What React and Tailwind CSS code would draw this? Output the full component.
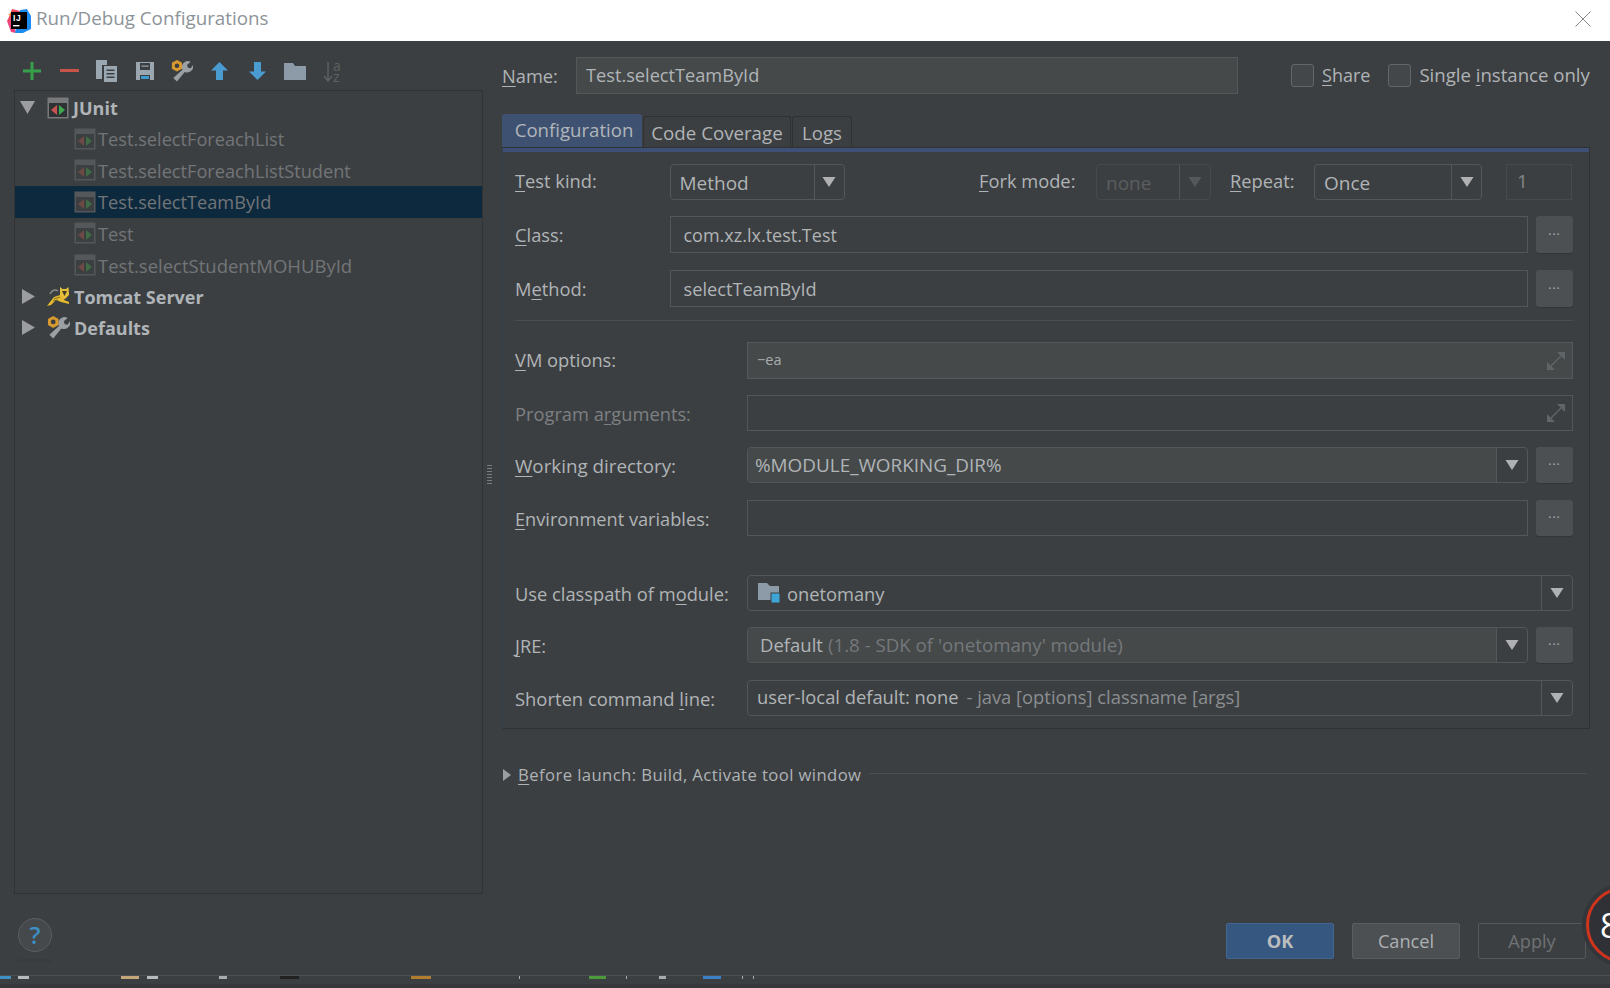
const Und = ({ children }) => (
  <span className="underline underline-offset-[3px] decoration-1">{children}</span>
);

const Tri = ({ className = "fill-[#afb1b3]" }) => (
  <svg width="14" height="12" viewBox="0 0 14 12" className={className}>
    <polygon points="0.5,1 13.5,1 7,11" />
  </svg>
);

const Caret = ({ disabled, className = "" }) => (
  <div className={`flex items-center justify-center border-l border-[#54575a] ${className}`}>
    <Tri className={disabled ? "fill-[#55585a]" : "fill-[#afb1b3]"} />
  </div>
);

const Dots = () => (
  <button className="flex h-full w-[37px] shrink-0 items-center justify-center rounded-[3px] bg-[#4c5052] text-[12px] leading-none tracking-[1px] text-[#b5b7b9] shadow-[0_1px_1px_#333537]">
    ···
  </button>
);

const Expand = () => (
  <svg width="18" height="18" viewBox="0 0 18 18" className="shrink-0">
    <polygon points="10,0 18,0 18,8" fill="#5f6467" />
    <polygon points="0,10 0,18 8,18" fill="#5f6467" />
    <path d="M14 4 4 14" stroke="#5f6467" strokeWidth="1.5" />
  </svg>
);

const JUnitIcon = ({ dim }) => (
  <svg width="22" height="22" viewBox="0 0 22 22" className="shrink-0">
    <rect x="0.5" y="0.5" width="21" height="21" fill={dim ? "#55585a" : "#77797b"} />
    <rect x="2" y="6" width="18" height="14" fill={dim ? "#3c3f41" : "#2f3234"} />
    <polygon points="10,8 10,18 4,13" fill={dim ? "#6e4a45" : "#c75450"} />
    <polygon points="12,8 12,18 18,13" fill={dim ? "#3f6b45" : "#3ea84f"} />
  </svg>
);

const WrenchIcon = ({ size = 23 }) => (
  <svg width={size} height={size} viewBox="0 0 24 24" className="shrink-0">
    <path d="M6.5 23.5 2.5 19.5 12.5 10.5a6.5 6.5 0 0 1 9-8.5L17.5 5.5l1 3 3 .5 2.5-3.5a6.5 6.5 0 0 1-9 7.5z" fill="#9aa0a4" />
    <polygon points="6.5,0 12,3 12,9.5 6.5,12.5 1,9.5 1,3" fill="#d89a2e" />
    <circle cx="6.5" cy="6.2" r="2.5" fill="#3c3f41" />
  </svg>
);

const TomcatIcon = () => (
  <svg width="23" height="22" viewBox="0 0 23 22" className="shrink-0">
    <path d="M3 9c2-4 5-5 8-3" fill="none" stroke="#8b8d85" strokeWidth="1.4" />
    <polygon points="13,2 15.5,4 19,4 21.5,2 22,10 18,14 13,11" fill="#e4c13c" />
    <path d="M15 6h5l-2.5 5z" fill="#3f3a22" />
    <polygon points="13,10 18,13 17,15 22,17 22,19 14,17 9,15 4,20 0,21 3,17 7,12" fill="#e4b82f" />
    <path d="M7 14l6-2M6 16l5-1" stroke="#6a5a1e" strokeWidth="0.8" />
  </svg>
);

const IdeaLogo = () => (
  <svg width="26" height="26" viewBox="0 0 26 26" className="shrink-0">
    <polygon points="6,1 14,3 10,14 1,13 3,9" fill="#f0445f" />
    <polygon points="1,13 7,12 10,25 5,24" fill="#f0447a" />
    <polygon points="14,2 21,1 25,8 25,21 17,25 9,25" fill="#1d8cf0" />
    <polygon points="2,7 6,4 7,8" fill="#fb8c2f" />
    <rect x="5" y="4" width="16" height="17" fill="#000" />
    <text x="7" y="13" fontSize="8.5" fontWeight="700" fill="#fff" fontFamily="Liberation Sans, sans-serif" letterSpacing="0.6">IJ</text>
    <rect x="7" y="17" width="6.5" height="1.4" fill="#fff" />
  </svg>
);

const toolbarIcons = [
  <svg width="18" height="18" viewBox="0 0 18 18"><path d="M7.5 0h3v7.5H18v3h-7.5V18h-3v-7.5H0v-3h7.5z" fill="#36a04a" /></svg>,
  <svg width="19" height="4" viewBox="0 0 19 4"><rect width="19" height="3" fill="#c9544a" /></svg>,
  <svg width="21" height="22" viewBox="0 0 21 22">
    <path d="M0 0h11v5H6v14H0z" fill="#9aa7b0" />
    <path d="M8 6h13v16H8z" fill="#9aa7b0" />
    <path d="M10.5 9.5h8v1.5h-8zM10.5 13h8v1.5h-8zM10.5 16.5h8v1.5h-8z" fill="#3c3f41" />
  </svg>,
  <svg width="18" height="18" viewBox="0 0 18 18">
    <path d="M0 0h18v18H0z" fill="#9aa7b0" />
    <path d="M4 1h10v7H4z" fill="#3c3f41" />
    <path d="M5.5 3.5h7v1.2h-7z" fill="#9aa7b0" />
    <path d="M4 13h10v5H4z" fill="#3c3f41" />
    <path d="M5 14h8v3H5z" fill="#3d9bd0" />
  </svg>,
  <WrenchIcon size={22} />,
  <svg width="17" height="18" viewBox="0 0 17 18"><polygon points="8.5,0 17,8.5 12,8.5 12,18 5,18 5,8.5 0,8.5" fill="#4a9cd0" /></svg>,
  <svg width="17" height="18" viewBox="0 0 17 18"><polygon points="8.5,18 17,9.5 12,9.5 12,0 5,0 5,9.5 0,9.5" fill="#4a9cd0" /></svg>,
  <svg width="22" height="17" viewBox="0 0 22 17"><path d="M0 0h9l2 3h11v14H0z" fill="#8c9ba7" /></svg>,
  <div className="flex h-[22px] w-[19px]">
    <svg width="10" height="20" viewBox="0 0 10 20" className="mt-[2px]">
      <path d="M5 0v19M1 14l4 5 4-5" fill="none" stroke="#5e6163" strokeWidth="1.4" />
    </svg>
    <div className="flex flex-col text-[14px] leading-[11px] text-[#5e6163]">
      <span>a</span>
      <span>z</span>
    </div>
  </div>,
];

const tests = [
  { name: "Test.selectForeachList", size: "text-[18.2px]" },
  { name: "Test.selectForeachListStudent", size: "text-[18.2px]" },
  { name: "Test.selectTeamById", size: "text-[18.2px]", selected: true },
  { name: "Test", size: "text-[18.2px]" },
  { name: "Test.selectStudentMOHUById", size: "text-[18.5px]" },
];

const Group = ({ open, icon, label }) => (
  <div className="flex h-[31.4px] items-center pl-[5px]">
    <div className="flex w-[27px] items-center">
      {open ? (
        <svg width="15" height="13" viewBox="0 0 15 13"><polygon points="0,0 15,0 7.5,13" fill="#9b9da0" /></svg>
      ) : (
        <svg width="13" height="15" viewBox="0 0 13 15" className="ml-[2px]"><polygon points="0,0 13,7.5 0,15" fill="#9b9da0" /></svg>
      )}
    </div>
    {icon}
    <span className="ml-[4px] pt-[2px] text-[18px] font-bold text-[#afb4b8]">{label}</span>
  </div>
);

const Tree = () => (
  <div className="h-[804px] w-[469px] border border-[#303234] pt-[1px]">
    <Group open icon={<JUnitIcon />} label="JUnit" />
    {tests.map((t) => (
      <div
        key={t.name}
        className={`flex h-[31.4px] items-center pl-[59px] ${t.selected ? "bg-[#0d293e]" : ""}`}
      >
        <JUnitIcon dim />
        <span className={`ml-[2px] pt-[2px] text-[#727578] ${t.size}`}>{t.name}</span>
      </div>
    ))}
    <Group icon={<TomcatIcon />} label="Tomcat Server" />
    <Group icon={<WrenchIcon />} label="Defaults" />
  </div>
);

const Label = ({ children, shift = "pt-[2px]", className = "w-[154.5px] text-[#b0b4b7]" }) => (
  <div className={`shrink-0 text-[18.3px] ${shift} ${className}`}>{children}</div>
);

const Input = ({ children, filled, className = "" }) => (
  <div
    className={`flex h-full min-w-0 flex-1 items-center border ${
      filled ? "border-[#54585a] bg-[#45494a]" : "border-[#54575a]"
    } ${className}`}
  >
    {children}
  </div>
);

const Combo = ({ children, filled, caret = "w-[31px]" }) => (
  <div className="flex h-full min-w-0 flex-1 overflow-hidden rounded-[4px] border border-[#54575a]">
    <div className={`flex min-w-0 flex-1 items-center ${filled ? "bg-[#45494a]" : ""}`}>{children}</div>
    <Caret className={caret} />
  </div>
);

const Tabs = () => (
  <div className="flex h-[34px] items-end border-b border-[#2f3133]">
    <div className="flex h-[33px] w-[140px] justify-center rounded-t-[3px] bg-[#3f5170] pl-[4px] pt-[2px] text-[18.6px] text-[#b0b6bb]">
      Configuration
    </div>
    <div className="ml-[1px] flex h-[31px] w-[148px] items-center justify-center rounded-t-[3px] border border-b-0 border-[#2f3133] pt-[2px] text-[18.7px] text-[#b0b4b7]">
      Code Coverage
    </div>
    <div className="ml-[1px] flex h-[31px] w-[60px] items-center justify-center rounded-t-[3px] border border-b-0 border-[#2f3133] pt-[2px] text-[18.6px] text-[#b0b4b7]">
      Logs
    </div>
  </div>
);

const wideLabel = "w-[232px] text-[#b0b4b7]";

const ConfigPanel = () => (
  <div className="h-[581px] border-x border-b border-[#2f3133] border-l-[#34404f]">
    <div className="h-[4px] bg-[#3f5078]" />
    <div className="pl-[12px] pr-[16px]">
      <div className="mt-[12px] flex h-[36px] items-center">
        <Label shift="pb-[2px]"><Und>T</Und>est kind:</Label>
        <div className="flex h-full w-[175px] overflow-hidden rounded-[4px] border border-[#54575a]">
          <span className="flex-1 pl-[9px] pt-[4px] text-[19px] text-[#b0b4b7]">Method</span>
          <Caret className="w-[30px]" />
        </div>
        <Label shift="pb-[2px]" className="ml-[134.5px] w-[117px] text-[#b0b4b7]"><Und>F</Und>ork mode:</Label>
        <div className="flex h-full w-[115px] overflow-hidden rounded-[4px] border border-[#47494b]">
          <span className="flex-1 pl-[9px] pt-[4px] text-[19px] text-[#5b5d5f]">none</span>
          <Caret disabled className="w-[31px] border-[#47494b]" />
        </div>
        <Label shift="pb-[2px]" className="ml-[19px] w-[84px] text-[#b0b4b7]"><Und>R</Und>epeat:</Label>
        <div className="flex h-full w-[168px] overflow-hidden rounded-[4px] border border-[#54575a]">
          <span className="flex-1 pl-[9px] pt-[4px] text-[19px] text-[#b0b4b7]">Once</span>
          <Caret className="w-[30px]" />
        </div>
        <div className="ml-[24px] flex h-full w-[66px] items-center border border-[#47494b] pb-[2px] pl-[10px] text-[19px] text-[#85888a]">
          1
        </div>
      </div>

      <div className="mt-[16px] flex h-[37px] items-center">
        <Label shift=""><Und>C</Und>lass:</Label>
        <Input><span className="pl-[13px] pt-[2px] text-[18px] text-[#b0b4b7]">com.xz.lx.test.Test</span></Input>
        <div className="ml-[8px] h-full"><Dots /></div>
      </div>

      <div className="mt-[17px] flex h-[37px] items-center">
        <Label shift="">M<Und>e</Und>thod:</Label>
        <Input><span className="pl-[13px] pt-[2px] text-[18.2px] text-[#b0b4b7]">selectTeamById</span></Input>
        <div className="ml-[8px] h-full"><Dots /></div>
      </div>

      <div className="mt-[13px] h-px bg-[#4b4e50]" />

      <div className="mt-[21px] flex h-[37px] items-center">
        <Label shift="pb-[1px]" className={wideLabel}><Und>V</Und>M options:</Label>
        <Input filled className="justify-between pr-[7px]">
          <span className="pb-[2px] pl-[9px] text-[14.5px] text-[#a9adb0]">−ea</span>
          <Expand />
        </Input>
      </div>

      <div className="mt-[16px] flex h-[36px] items-center">
        <Label className="w-[232px] text-[#7d8083]">Program a<Und>r</Und>guments:</Label>
        <Input className="justify-end border-[#494c4e] pr-[7px]"><Expand /></Input>
      </div>

      <div className="mt-[16px] flex h-[36px] items-center">
        <Label className={wideLabel}><span className="text-[18.8px]"><Und>W</Und>orking directory:</span></Label>
        <Combo filled><span className="pl-[7px] text-[18.9px] text-[#b0b4b7]">%MODULE_WORKING_DIR%</span></Combo>
        <div className="ml-[8px] h-full"><Dots /></div>
      </div>

      <div className="mt-[17px] flex h-[36px] items-center">
        <Label className={wideLabel}><span className="text-[18.2px]"><Und>E</Und>nvironment variables:</span></Label>
        <Input className="border-[#494c4e]" />
        <div className="ml-[8px] h-full"><Dots /></div>
      </div>

      <div className="mt-[39px] flex h-[36px] items-center">
        <Label className={wideLabel}>Use classpath of m<Und>o</Und>dule:</Label>
        <Combo>
          <svg width="23" height="21" viewBox="0 0 23 21" className="ml-[10px] shrink-0">
            <path d="M0 0h9l3 3h9v14H0z" fill="#8c9ba7" />
            <rect x="13" y="10" width="9" height="10" fill="#3da6d6" stroke="#3c3f41" />
          </svg>
          <span className="ml-[6px] pt-[2px] text-[18.3px] text-[#b0b4b7]">onetomany</span>
        </Combo>
      </div>

      <div className="mt-[16px] flex h-[36px] items-center">
        <Label className={wideLabel}><Und>J</Und>RE:</Label>
        <Combo filled>
          <span className="pl-[12px] text-[18.5px] text-[#b0b4b7]">Default</span>
          <span className="ml-[5px] text-[18.7px] text-[#75787b]">(1.8 - SDK of 'onetomany' module)</span>
        </Combo>
        <div className="ml-[8px] h-full"><Dots /></div>
      </div>

      <div className="mt-[17px] flex h-[36px] items-center">
        <Label className={wideLabel}><span className="text-[18.4px]">Shorten command <Und>l</Und>ine:</span></Label>
        <Combo>
          <span className="pb-[2px] pl-[9px] text-[18.35px] text-[#b0b4b7]">user-local default: none</span>
          <span className="ml-[8px] pb-[2px] text-[18.35px] text-[#8b8e91]">- java [options] classname [args]</span>
        </Combo>
      </div>
    </div>
  </div>
);

const Check = ({ children, className = "" }) => (
  <div className={`flex items-center ${className}`}>
    <div className="h-[23px] w-[23px] rounded-[3px] border border-[#646769] bg-[#43474a]" />
    <span className="ml-[8px] text-[#b0b4b7]">{children}</span>
  </div>
);

const Btn = ({ children, className = "" }) => (
  <button className={`h-[36px] w-[108px] rounded-[2px] border pt-[2px] text-[18.2px] ${className}`}>{children}</button>
);

// bits of the window behind the dialog, only their top edge shows
const peeks = [
  "ml-0 w-[11px] bg-[#3d8fc4]",
  "ml-[7px] w-[11px] bg-[#b8babc]",
  "ml-[92px] w-[18px] bg-[#c5a57a]",
  "ml-[8px] w-[11px] bg-[#b8babc]",
  "ml-[61px] w-[8px] bg-[#a9abad]",
  "ml-[53px] w-[19px] bg-[#222]",
  "ml-[112px] w-[20px] bg-[#b07d2e]",
  "ml-[88px] w-[1px] bg-[#a9abad]",
  "ml-[69px] w-[17px] bg-[#4c9a3c]",
  "ml-[20px] w-[1px] bg-[#a9abad]",
  "ml-[32px] w-[7px] bg-[#a9abad]",
  "ml-[37px] w-[18px] bg-[#3d7fc4]",
  "ml-[21px] w-[1px] bg-[#a9abad]",
  "ml-[10px] w-[1px] bg-[#a9abad]",
];

export default function App() {
  return (
    <div className="relative flex h-[988px] w-[1610px] flex-col overflow-hidden bg-[#3c3f41] font-['Open_Sans',sans-serif]">
      <div className="flex h-[41px] shrink-0 items-center bg-white pl-[6px] pr-[20px]">
        <IdeaLogo />
        <span className="ml-[4px] pb-[4px] text-[18.8px] text-[#8d9499]">Run/Debug Configurations</span>
        <svg width="16" height="16" viewBox="0 0 16 16" className="mb-[4px] ml-auto mr-[-1px]">
          <path d="M0.5 0.5l15 15M15.5 0.5l-15 15" stroke="#8a8a8a" strokeWidth="1" />
        </svg>
      </div>

      <div className="flex h-[852px] shrink-0">
        <div className="w-[483px] shrink-0 pl-[14px]">
          <div className="-ml-[1px] flex h-[49px] items-center pt-[11px]">
            {toolbarIcons.map((icon, i) => (
              <div key={i} className="flex w-[37.6px] justify-center">{icon}</div>
            ))}
          </div>
          <Tree />
        </div>

        <div className="flex w-[19px] shrink-0 justify-center pr-[6px] pt-[424px]">
          <div className="h-[21px] w-[5px] bg-[repeating-linear-gradient(to_bottom,#7b7e80_0,#7b7e80_1px,transparent_1px,transparent_3px)]" />
        </div>

        <div className="w-[1088px] shrink-0">
          <div className="mt-[16px] flex h-[37px] items-center">
            <div className="w-[74px] text-[18.3px] text-[#b0b4b7]"><Und>N</Und>ame:</div>
            <div className="flex h-full w-[662px] items-center border border-[#54585a] bg-[#45494a] pl-[9px] text-[18.2px] text-[#b0b4b7]">
              Test.selectTeamById
            </div>
            <Check className="ml-[53px]"><span className="text-[18px]"><Und>S</Und>hare</span></Check>
            <Check className="ml-[18px]"><span className="block pb-[2px] text-[18.6px]">Single <Und>i</Und>nstance only</span></Check>
          </div>
          <div className="mt-[20px]">
            <Tabs />
            <ConfigPanel />
          </div>
          <div className="mt-[33px] flex items-center pl-[1px]">
            <svg width="8" height="12" viewBox="0 0 8 12"><polygon points="0,0 8,6 0,12" fill="#9b9da0" /></svg>
            <span className="ml-[7px] text-[16.7px] tracking-[0.4px] text-[#afb3b6]"><Und>B</Und>efore launch: Build, Activate tool window</span>
            <div className="mb-[3px] ml-[8px] h-px w-[718px] bg-[#4b4e50]" />
          </div>
        </div>
      </div>

      <div className="flex h-[82px] shrink-0">
        <div className="pl-[18px] pt-[25px]">
          <div className="flex h-[34px] w-[34px] items-center justify-center rounded-full border border-[#5b5e60] bg-[#46494c] text-[24px] font-semibold leading-none text-[#3d8fc4]">
            ?
          </div>
          <div className="mt-[7px] h-[3px] w-[34px] bg-[#393b3d]" />
        </div>
        <div className="ml-auto flex gap-[18px] pr-[24px] pt-[30px]">
          <Btn className="border-[#41668f] bg-[#365880] font-bold text-[#bbbdbf]">OK</Btn>
          <Btn className="border-[#5a5d5f] bg-[#4c5052] text-[#adb1b4]">Cancel</Btn>
          <Btn className="border-[#55585a] text-[#6f7275]">Apply</Btn>
        </div>
      </div>

      <div className="h-[13px] shrink-0 border-t border-[#4c5052]">
        <div className="flex h-[4px] items-start">
          {peeks.map((p) => (
            <div key={p} className={`h-[3px] shrink-0 ${p}`} />
          ))}
        </div>
        <div className="mt-[4px] h-[4px] bg-[#35373a]" />
      </div>

      <div className="absolute left-[1582px] top-[883px] flex h-[84px] w-[84px] items-center rounded-full bg-[#33363a] p-[4px]">
        <div className="flex h-full w-full items-center rounded-full border-[3px] border-[#d0341c] bg-[#2f3136] pl-[11px] text-[34px] leading-none text-white">
          8
        </div>
      </div>
    </div>
  );
}
